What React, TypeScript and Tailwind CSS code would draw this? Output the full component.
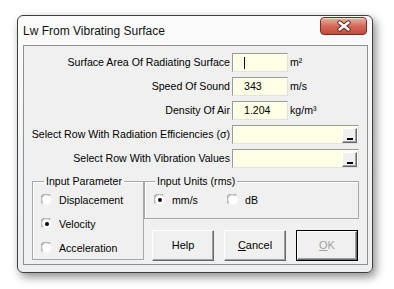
import type { ReactNode } from "react";

const font = { fontFamily: '"Liberation Sans", Arial, sans-serif' };

function Radio({ checked }: { checked?: boolean }) {
  return (
    <svg width="12" height="12" viewBox="0 0 12 12" className="shrink-0">
      <circle cx="6" cy="6" r="5.5" fill="#ffffff" />
      <path d="M1.2 9.5 A5.3 5.3 0 0 1 9.5 1.2" fill="none" stroke="#9a9a9a" strokeWidth="1" />
      <path d="M2 8.6 A4.4 4.4 0 0 1 8.6 2" fill="none" stroke="#7a7a7a" strokeWidth="0.6" />
      <path d="M9.5 1.8 A5.3 5.3 0 0 1 1.8 9.5" fill="none" stroke="#ececec" strokeWidth="1" />
      {checked && <circle cx="6" cy="6" r="2" fill="#000000" />}
    </svg>
  );
}

function RadioItem({ label, checked, className }: { label: string; checked?: boolean; className?: string }) {
  return (
    <div className={`flex h-[16px] items-center gap-[6px] ${className ?? ""}`}>
      <Radio checked={checked} />
      <span className="text-[10.6px] leading-none text-black">{label}</span>
    </div>
  );
}

function TextBox({ value, width, cursor, children }: { value?: string; width: string; cursor?: boolean; children?: ReactNode }) {
  return (
    <div
      className={`flex h-[19px] ${width} items-center border border-t-[#9a9a9a] border-l-[#9a9a9a] border-b-[#e2e2e2] border-r-[#e2e2e2] bg-[#ffffe6] pl-[11px] text-[10.6px] text-black`}
    >
      {cursor && <span className="h-[12px] w-px bg-black" />}
      {value && <span className="leading-none">{value}</span>}
      {children}
    </div>
  );
}

function RefButton() {
  return (
    <div className="ml-auto mr-px flex h-[15px] w-[15px] items-end justify-center self-end border border-t-white border-l-white border-b-[#696969] border-r-[#696969] bg-[#f0f0f0] pb-[2px] shadow-[inset_-1px_-1px_0_#a0a0a0]">
      <div className="h-[2px] w-[6px] bg-black" />
    </div>
  );
}

function Row({ label, children }: { label: string; children: ReactNode }) {
  return (
    <div className="flex h-[19px] items-center">
      <div className="flex w-[206px] justify-end whitespace-nowrap text-[10.6px] text-black">{label}</div>
      <div className="ml-[2px] flex items-center">{children}</div>
    </div>
  );
}

function Unit({ children }: { children: ReactNode }) {
  return <span className="ml-[2px] text-[10.6px] text-black">{children}</span>;
}

function Button({ children, isDefault }: { children: ReactNode; isDefault?: boolean }) {
  const inner = (
    <div className="flex h-full w-full items-center justify-center border border-t-white border-l-white border-b-[#696969] border-r-[#696969] bg-[#f0f0f0] text-[11px] shadow-[inset_-1px_-1px_0_#a0a0a0]">
      {children}
    </div>
  );
  return isDefault ? (
    <div className="h-[31px] w-[62px] border border-black">{inner}</div>
  ) : (
    <div className="h-[31px] w-[62px]">{inner}</div>
  );
}

export default function App() {
  return (
    <div className="h-[289px] w-[394px] bg-white pl-[17px] pt-[15px]" style={font}>
      <div className="flex h-[258px] w-[356px] flex-col rounded-[6px] border border-[#3f3f3f] bg-gradient-to-b from-[#fbfbfb] to-[#eceef0] pb-[7px] pl-[5px] pr-[4px] shadow-[3px_4px_10px_rgba(0,0,0,0.45)]">
        <div className="flex h-[29px] items-start justify-between">
          <span className="mt-[7px] text-[12px] leading-[16px] text-[#111]">Lw From Vibrating Surface</span>
          <div className="mr-[1px] mt-[1px] flex h-[18px] w-[47px] items-center justify-center rounded-[4px] border border-[#7b2b23] bg-gradient-to-b from-[#eab0a5] via-[#d6695b] to-[#c4493a] shadow-[inset_0_1px_0_rgba(255,255,255,0.5)]">
            <svg width="16" height="12" viewBox="0 0 16 12">
              <path d="M3.5 2.5 L12.5 9.5 M12.5 2.5 L3.5 9.5" stroke="#5a2a26" strokeWidth="4.2" strokeLinecap="round" />
              <path d="M3.5 2.5 L12.5 9.5 M12.5 2.5 L3.5 9.5" stroke="#ffffff" strokeWidth="2.4" strokeLinecap="round" />
            </svg>
          </div>
        </div>
        <div className="flex h-[220px] w-[345px] flex-col border border-[#8f8f8f] bg-[#f0f0f0] pt-[7px]">
          <div className="flex flex-col gap-[5px]">
            <Row label="Surface Area Of Radiating Surface">
              <TextBox width="w-[56px]" cursor />
              <Unit>m²</Unit>
            </Row>
            <Row label="Speed Of Sound">
              <TextBox width="w-[56px]" value="343" />
              <Unit>m/s</Unit>
            </Row>
            <Row label="Density Of Air">
              <TextBox width="w-[56px]" value="1.204" />
              <Unit>kg/m³</Unit>
            </Row>
            <Row label="Select Row With Radiation Efficiencies (σ)">
              <TextBox width="w-[127px]">
                <RefButton />
              </TextBox>
            </Row>
            <Row label="Select Row With Vibration Values">
              <TextBox width="w-[127px]">
                <RefButton />
              </TextBox>
            </Row>
          </div>
          <div className="mt-[6px] flex pl-[8px]">
            <fieldset className="h-[86px] w-[112px] border border-[#a8a8a8] shadow-[inset_1px_1px_0_#ffffff]">
              <legend className="ml-[11px] px-[2px] text-[10.6px] leading-[14px] text-black">Input Parameter</legend>
              <div className="mt-[4px] flex flex-col gap-[8px] pl-[8px]">
                <RadioItem label="Displacement" />
                <RadioItem label="Velocity" checked />
                <RadioItem label="Acceleration" />
              </div>
            </fieldset>
            <div className="flex w-[215px] flex-col">
              <fieldset className="h-[45px] w-[215px] border border-[#a8a8a8] shadow-[inset_1px_1px_0_#ffffff]">
                <legend className="ml-[10px] px-[2px] text-[10.6px] leading-[14px] text-black">Input Units (rms)</legend>
                <div className="mt-[4px] flex pl-[9px]">
                  <RadioItem label="mm/s" checked className="w-[73px]" />
                  <RadioItem label="dB" />
                </div>
              </fieldset>
              <div className="mt-[11px] flex gap-[10px] pl-[8px]">
                <Button>Help</Button>
                <Button>
                  <span>
                    <span className="underline">C</span>ancel
                  </span>
                </Button>
                <Button isDefault>
                  <span className="text-[#a0a0a0]">
                    <span className="underline">O</span>K
                  </span>
                </Button>
              </div>
            </div>
          </div>
        </div>
      </div>
    </div>
  );
}
